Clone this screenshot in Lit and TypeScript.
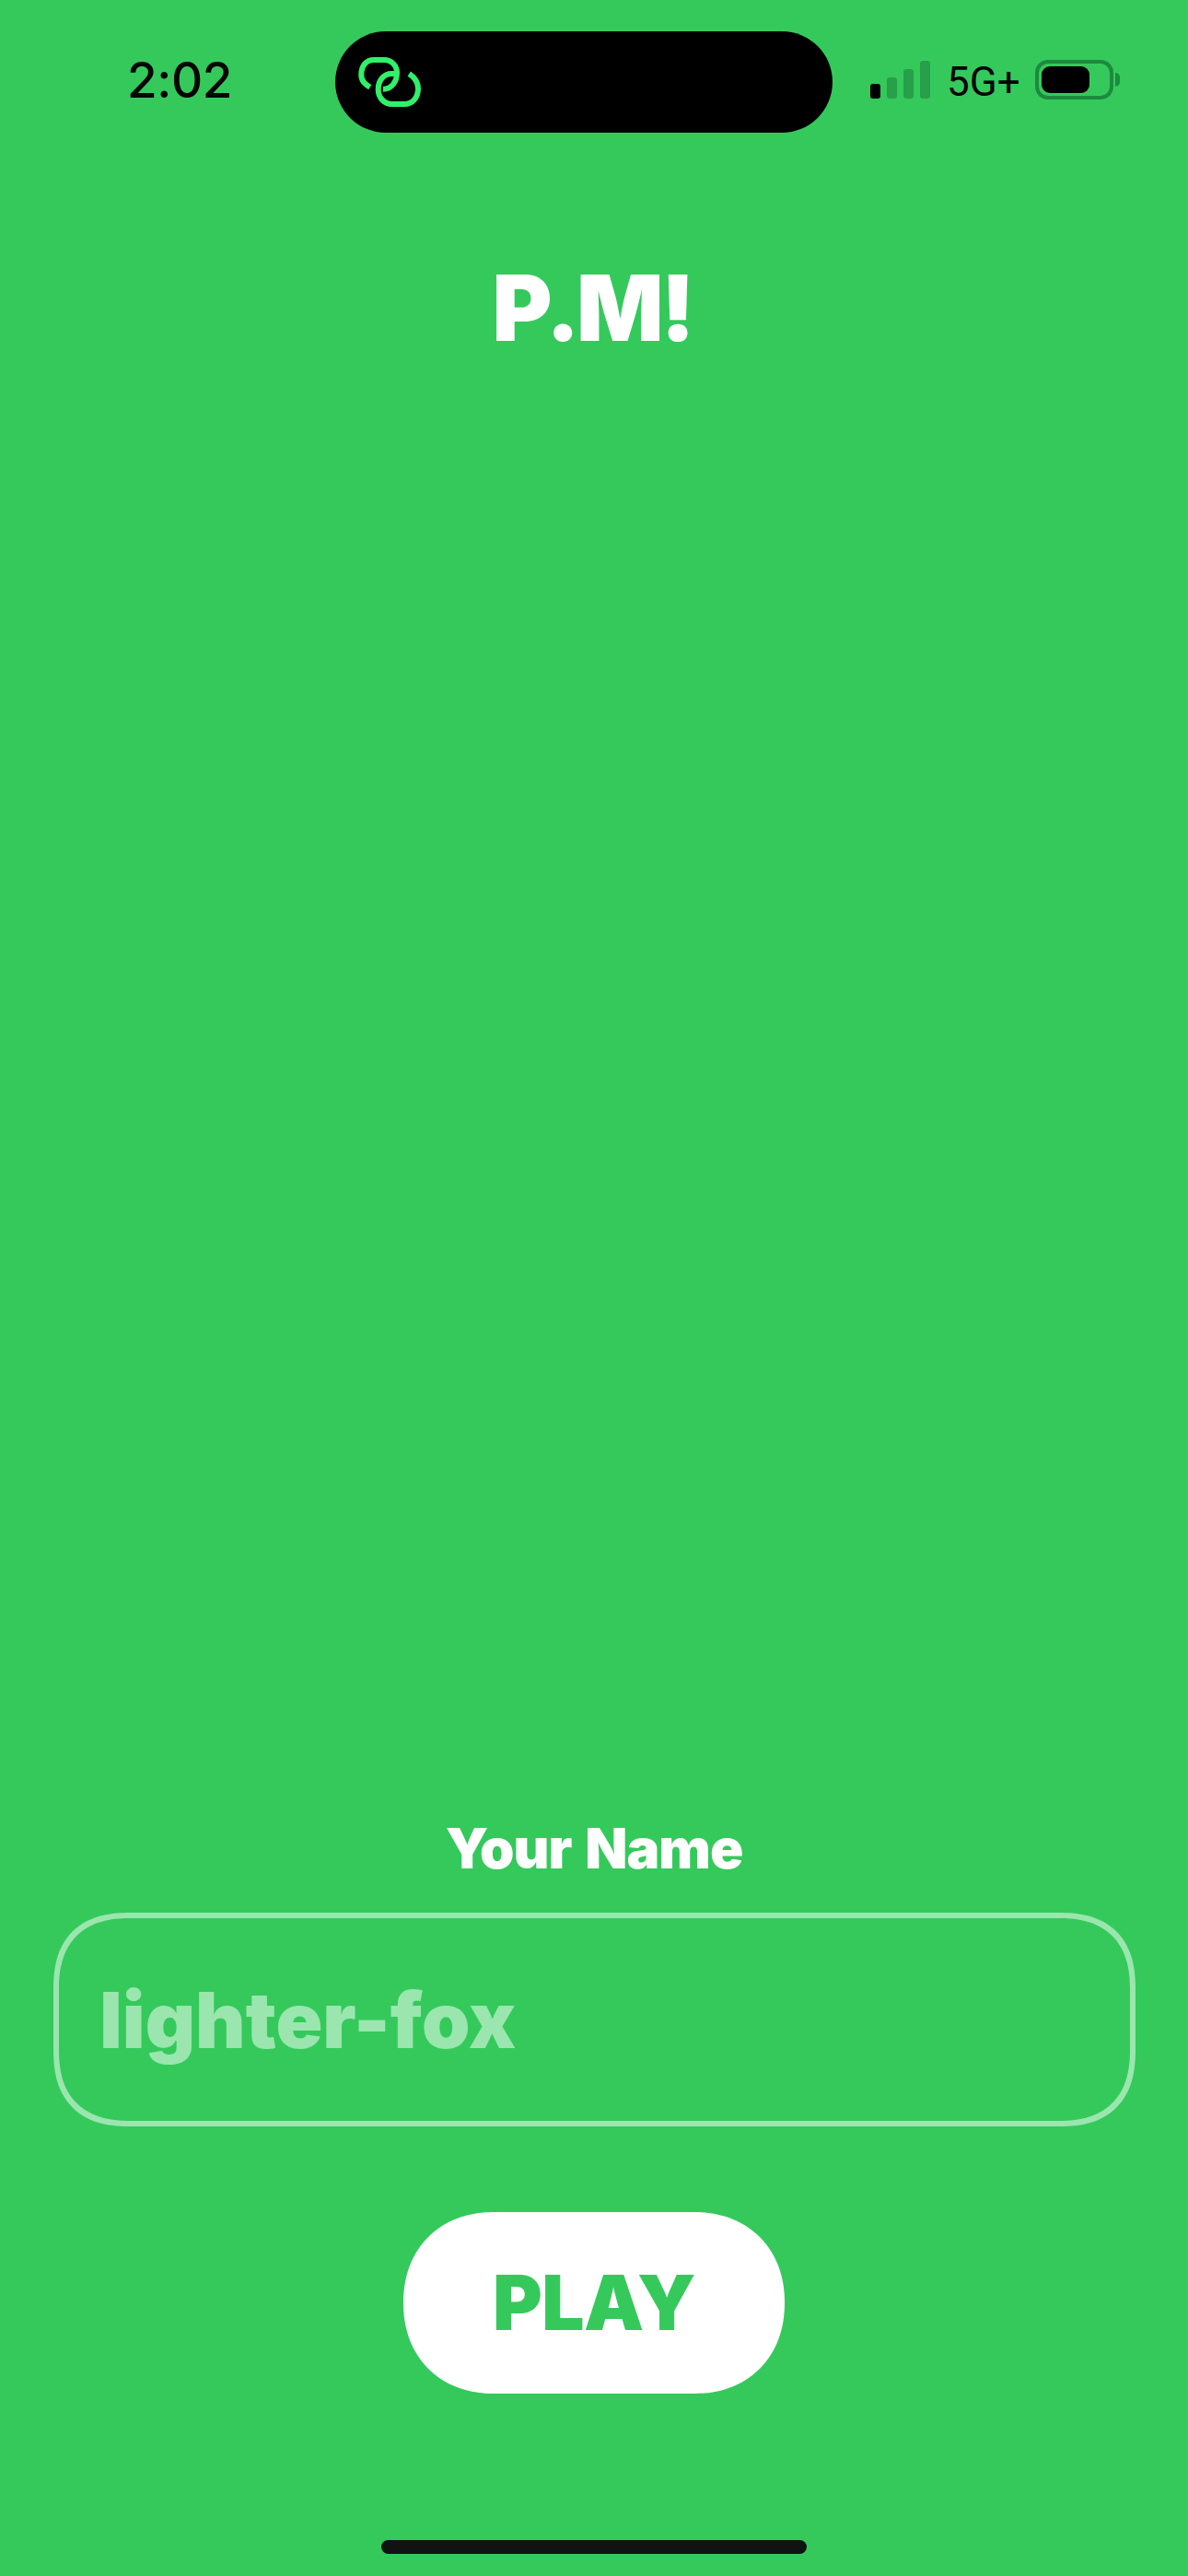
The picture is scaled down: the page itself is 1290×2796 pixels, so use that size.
import { LitElement, html, css } from "lit";
import { customElement } from "lit/decorators.js";

@customElement("app-root")
export class AppRoot extends LitElement {
  static styles = css`
    :host {
      display: flex;
      flex-direction: column;
      height: 2796px;
      background: #35c95c;
      font-family: Inter, "Liberation Sans", sans-serif;
      color: #fff;
    }
    .status {
      display: flex;
      align-items: center;
      height: 110px;
      margin-top: 34px;
    }
    .time {
      width: 364px;
      box-sizing: border-box;
      padding-left: 138px;
      font-size: 53px;
      font-weight: 500;
      letter-spacing: -0.4px;
      color: #050505;
      line-height: 1;
      margin-top: -3px;
    }
    .island {
      width: 540px;
      height: 110px;
      border-radius: 55px;
      background: #000;
      display: flex;
      align-items: center;
      padding-left: 25px;
      box-sizing: border-box;
    }
    .island svg {
      width: 70px;
      height: 56px;
    }
    .right {
      display: flex;
      align-items: center;
      margin-left: 41px;
      margin-top: -5px;
    }
    .signal {
      display: flex;
      align-items: flex-end;
      gap: 7px;
      height: 41px;
    }
    .signal span {
      width: 11px;
      border-radius: 3px;
      background: #27a049;
    }
    .signal span.on {
      background: #000;
    }
    .net {
      margin: 4px 0 0 18px;
      font-family: Roboto, sans-serif;
      font-size: 44px;
      line-height: 1;
      color: #050505;
      width: 96px;
    }
    .battery {
      display: flex;
      align-items: center;
      gap: 2px;
    }
    .shell {
      box-sizing: border-box;
      width: 85px;
      height: 43px;
      border: 4px solid #1d8a3e;
      border-radius: 14px;
      padding: 3px;
    }
    .shell div {
      width: 52px;
      height: 29px;
      border-radius: 9px;
      background: #000;
    }
    .nub {
      width: 5px;
      height: 15px;
      border-radius: 0 8px 8px 0;
      background: #1d8a3e;
    }
    h1 {
      margin: 130px 4px 0 0;
      text-align: center;
      font-size: 99px;
      font-weight: 900;
      line-height: 120px;
      letter-spacing: -3.5px;
    }
    .form {
      margin-top: auto;
      display: flex;
      flex-direction: column;
      align-items: center;
      padding-bottom: 159px;
    }
    label {
      font-size: 60px;
      font-weight: 900;
      line-height: 72px;
      letter-spacing: -1px;
      word-spacing: 4px;
    }
    .input {
      box-sizing: border-box;
      align-self: stretch;
      margin: 34px 57px 0 58px;
      height: 232px;
      border: 6px solid #9ae6ae;
      border-radius: 84px;
      corner-shape: superellipse(1.3);
      padding-left: 44px;
      display: flex;
      align-items: center;
      font-size: 84px;
      font-weight: 900;
      color: #9ae6ae;
    }
    .play {
      margin-top: 93px;
      width: 414px;
      height: 197px;
      border-radius: 98px;
      corner-shape: superellipse(1.1);
      background: #fff;
      color: #35c95c;
      display: flex;
      align-items: center;
      justify-content: center;
      font-size: 82px;
      font-weight: 900;
      letter-spacing: -0.5px;
    }
    .home {
      align-self: center;
      width: 462px;
      height: 15px;
      border-radius: 8px;
      background: #111313;
      margin-bottom: 24px;
    }
  `;

  render() {
    return html`
      <div class="status">
        <div class="time">2:02</div>
        <div class="island">
          <svg viewBox="0 0 70 56" fill="none" stroke="#30f06a" stroke-width="6">
            <path d="M12.7 33.7C7 30 3.3 27 3.3 20C3.3 10 9 4 17 4H28C36 4 42 10 42 18C42 28 36 35.7 27 35.7" />
            <path d="M55.3 19C61 23 65 28 65 35C65 45 59 52 50 52H37C28 52 21.7 45 21.7 36C21.7 26 28 19 36 19H41" />
          </svg>
        </div>
        <div class="right">
          <div class="signal">
            <span class="on" style="height:16px"></span>
            <span style="height:23px"></span>
            <span style="height:32px"></span>
            <span style="height:41px"></span>
          </div>
          <div class="net">5G+</div>
          <div class="battery">
            <div class="shell"><div></div></div>
            <div class="nub"></div>
          </div>
        </div>
      </div>
      <h1>P.M!</h1>
      <div class="form">
        <label>Your Name</label>
        <div class="input">lighter-fox</div>
        <div class="play">PLAY</div>
      </div>
      <div class="home"></div>
    `;
  }
}
